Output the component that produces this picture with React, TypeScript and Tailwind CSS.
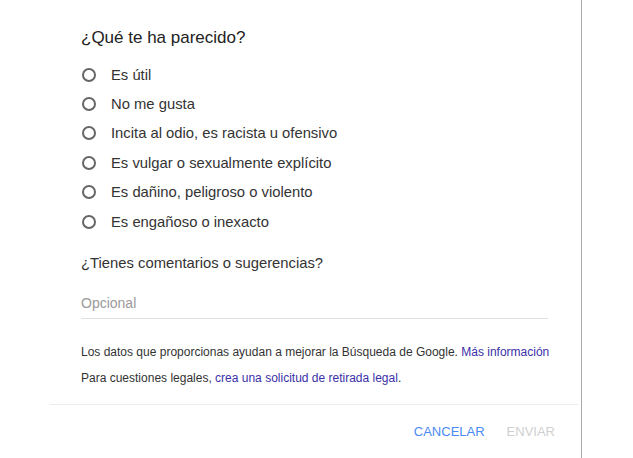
import React from 'react';

const options = [
  'Es útil',
  'No me gusta',
  'Incita al odio, es racista u ofensivo',
  'Es vulgar o sexualmente explícito',
  'Es dañino, peligroso o violento',
  'Es engañoso o inexacto',
];

function Radio() {
  return <span className="w-[14px] h-[14px] rounded-full border-2 border-[#666] shrink-0" />;
}

export default function App() {
  return (
    <div className="w-[633px] h-[458px] bg-white font-['Liberation_Sans',Arial,sans-serif] overflow-hidden">
      <div className="ml-[50px] w-[532px] h-full border-r border-[#aaa] flex flex-col">
        <div className="pl-[31px] pr-[33px] pt-[26px]">
          <h2 className="text-[17px] leading-[24px] text-[#222]">¿Qué te ha parecido?</h2>

          {/* options */}
          <div className="mt-[10px] flex flex-col">
            {options.map((opt) => (
              <label key={opt} className="h-[29.4px] flex items-center">
                <span className="ml-[1px] flex">
                  <Radio />
                </span>
                <span className="ml-[15px] text-[14.8px] text-[#333]">{opt}</span>
              </label>
            ))}
          </div>

          <h3 className="mt-[16px] text-[14.8px] leading-[22px] text-[#333]">
            ¿Tienes comentarios o sugerencias?
          </h3>

          <div className="mt-[19px] h-[26px] border-b border-[#e0e0e0] text-[14px] leading-[20px] text-[#9a9a9a]">
            Opcional
          </div>

          <p className="mt-[25px] text-[12px] leading-[16px] text-[#333] whitespace-nowrap">
            Los datos que proporcionas ayudan a mejorar la Búsqueda de Google.{' '}
            <a className="text-[#3a2fa8]">Más información</a>
          </p>
          <p className="mt-[10px] text-[12px] leading-[16px] text-[#333] whitespace-nowrap">
            Para cuestiones legales, <a className="text-[#3a2fa8]">crea una solicitud de retirada legal</a>.
          </p>
        </div>

        <div className="mt-[18px] mr-[3px] border-t border-[#ececec]" />

        <div className="flex justify-end gap-[22px] pr-[26px] pt-[18px] text-[13px] leading-[18px]">
          <button className="text-[#4a8af4]">CANCELAR</button>
          <button className="text-[#cfcfcf]">ENVIAR</button>
        </div>
      </div>
    </div>
  );
}
